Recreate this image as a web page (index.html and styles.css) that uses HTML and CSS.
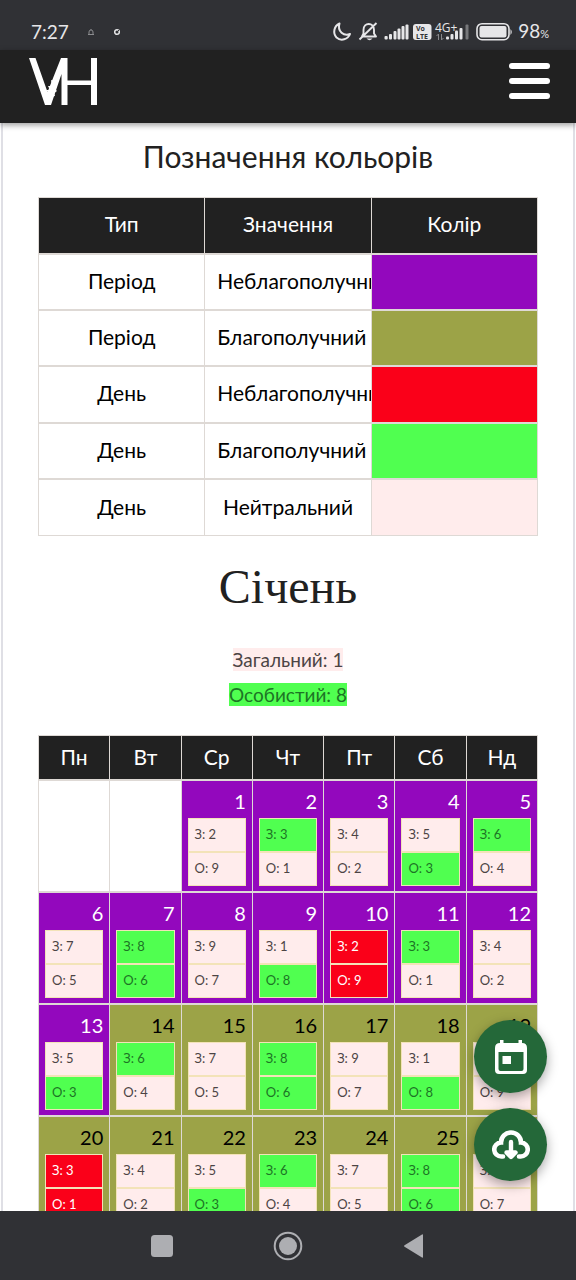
FILE: index.html
```html
<!DOCTYPE html>
<html lang="uk">
<head>
<meta charset="utf-8">
<meta name="viewport" content="width=device-width, initial-scale=1">
<title>Календар</title>
<link rel="stylesheet" href="styles.css">
</head>
<body>
<div class="screen">
  <div class="status">
    <div class="status-left">
      <span class="clock">7:27</span>
      <svg class="dot-icon dim" viewBox="0 0 8 8"><path d="M1 6.500h6M2 6V4a2 2 0 0 1 4 0v2M4 2V1" fill="none" stroke="currentColor"/></svg>
      <svg class="dot-icon" viewBox="0 0 8 8"><circle cx="4" cy="4" r="2.300" fill="none" stroke="currentColor" stroke-width="1.500"/><path d="M4 4l2-2" stroke="#303135"/></svg>
    </div>
    <svg class="status-icons" viewBox="0 0 184 24" role="img" aria-label="Стан пристрою">
      <path d="M7.500 3.500C2 6 .500 13 4.500 17.500 9 21.500 16 19.500 18 14 12 16.500 5 11.500 7.500 3.500z" fill="none" stroke="#e6e6e8" stroke-width="2" stroke-linejoin="round"/>
      <path d="M30 16.500h14l-2-3V10c0-8-10.500-8-10.500 0v3.500zM27.500 19.500L44.500 3" fill="none" stroke="#e6e6e8" stroke-width="1.900" stroke-linejoin="round"/>
      <path d="M34.500 18.500h6q-3 3.500-6 0z" fill="#e6e6e8"/>
      <g fill="#e6e6e8">
        <rect x="52.500" y="16" width="3.200" height="3.500" rx="1"/><rect x="57" y="14" width="3" height="5.500" rx="1"/><rect x="61.500" y="11" width="3" height="8.500" rx="1"/><rect x="65.500" y="8.500" width="3" height="11" rx="1"/><rect x="69.500" y="6" width="3" height="13.500" rx="1"/><rect x="73.500" y="4.500" width="3" height="15" rx="1"/>
        <rect x="81" y="4" width="18.500" height="16" rx="3"/>
      </g>
      <text class="volte" x="84" y="11">Vo</text>
      <text class="volte" x="84" y="19">LTE</text>
      <text class="net" x="103" y="12">4G+</text>
      <path d="M106.500 20v-6l-2 2M109.500 14v6l2-2" stroke="#88898c" fill="none"/>
      <g fill="#e6e6e8">
        <rect x="114" y="16.500" width="3" height="3" rx="1"/><rect x="118.500" y="14" width="3" height="5.500" rx="1"/><rect x="123" y="10.500" width="3" height="9" rx="1"/><rect x="127.500" y="8" width="3" height="11.500" rx="1"/><rect x="133.500" y="4.500" width="3" height="15" rx="1" fill="#77787b"/>
        <rect x="147.500" y="6" width="27" height="11.500" rx="2"/><path d="M178.500 9q2.500 3 0 6z"/>
      </g>
      <rect x="145" y="3.700" width="32" height="16" rx="5" fill="none" stroke="#e6e6e8" stroke-width="1.600"/>
    </svg>
    <span class="battery">98<small>%</small></span>
  </div>

  <header class="topbar">
    <a class="logo" href="#" aria-label="VH">
      <svg viewBox="0 0 68 48"><path fill="#fff" d="M0 0h6.500L18.500 34 32 0h6.500v22.500H62V0h6v47h-6V27H38.500v20h-6V16L22 47h-6z"/><path d="M22 22l3 1v4l3 1-2 3 2 2-3 2 1 3-5 1-3-2 2-2-3-3 4 0-2-4 4 0z" fill="#fff"/></svg>
    </a>
    <button class="burger" type="button" aria-label="Меню"><i></i><i></i><i></i></button>
  </header>

  <main class="viewport">
    <div class="page">
      <h2 class="subtitle">Позначення кольорів</h2>
      <table class="grid legend">
        <thead><tr><th>Тип</th><th>Значення</th><th>Колір</th></tr></thead>
        <tbody>
          <tr><td>Період</td><td>Неблагополучний</td><td class="purple"></td></tr>
          <tr><td>Період</td><td>Благополучний</td><td class="olive"></td></tr>
          <tr><td>День</td><td>Неблагополучний</td><td class="red"></td></tr>
          <tr><td>День</td><td>Благополучний</td><td class="green"></td></tr>
          <tr><td>День</td><td>Нейтральний</td><td class="pink"></td></tr>
        </tbody>
      </table>

      <h1 class="month">Січень</h1>
      <p class="number"><span class="pink">Загальний: 1</span></p>
      <p class="number"><span class="green">Особистий: 8</span></p>

      <table class="grid calendar">
        <thead><tr><th>Пн</th><th>Вт</th><th>Ср</th><th>Чт</th><th>Пт</th><th>Сб</th><th>Нд</th></tr></thead>
        <tbody>
          <tr>
            <td></td>
            <td></td>
            <td class="purple"><b>1</b><div class="pink">З: 2</div><div class="pink">О: 9</div></td>
            <td class="purple"><b>2</b><div class="green">З: 3</div><div class="pink">О: 1</div></td>
            <td class="purple"><b>3</b><div class="pink">З: 4</div><div class="pink">О: 2</div></td>
            <td class="purple"><b>4</b><div class="pink">З: 5</div><div class="green">О: 3</div></td>
            <td class="purple"><b>5</b><div class="green">З: 6</div><div class="pink">О: 4</div></td>
          </tr>
          <tr>
            <td class="purple"><b>6</b><div class="pink">З: 7</div><div class="pink">О: 5</div></td>
            <td class="purple"><b>7</b><div class="green">З: 8</div><div class="green">О: 6</div></td>
            <td class="purple"><b>8</b><div class="pink">З: 9</div><div class="pink">О: 7</div></td>
            <td class="purple"><b>9</b><div class="pink">З: 1</div><div class="green">О: 8</div></td>
            <td class="purple"><b>10</b><div class="red">З: 2</div><div class="red">О: 9</div></td>
            <td class="purple"><b>11</b><div class="green">З: 3</div><div class="pink">О: 1</div></td>
            <td class="purple"><b>12</b><div class="pink">З: 4</div><div class="pink">О: 2</div></td>
          </tr>
          <tr>
            <td class="purple"><b>13</b><div class="pink">З: 5</div><div class="green">О: 3</div></td>
            <td class="olive"><b>14</b><div class="green">З: 6</div><div class="pink">О: 4</div></td>
            <td class="olive"><b>15</b><div class="pink">З: 7</div><div class="pink">О: 5</div></td>
            <td class="olive"><b>16</b><div class="green">З: 8</div><div class="green">О: 6</div></td>
            <td class="olive"><b>17</b><div class="pink">З: 9</div><div class="pink">О: 7</div></td>
            <td class="olive"><b>18</b><div class="pink">З: 1</div><div class="green">О: 8</div></td>
            <td class="olive"><b>19</b><div class="pink">З: 2</div><div class="pink">О: 9</div></td>
          </tr>
          <tr>
            <td class="olive"><b>20</b><div class="red">З: 3</div><div class="red">О: 1</div></td>
            <td class="olive"><b>21</b><div class="pink">З: 4</div><div class="pink">О: 2</div></td>
            <td class="olive"><b>22</b><div class="pink">З: 5</div><div class="green">О: 3</div></td>
            <td class="olive"><b>23</b><div class="green">З: 6</div><div class="pink">О: 4</div></td>
            <td class="olive"><b>24</b><div class="pink">З: 7</div><div class="pink">О: 5</div></td>
            <td class="olive"><b>25</b><div class="green">З: 8</div><div class="green">О: 6</div></td>
            <td class="olive"><b>26</b><div class="pink">З: 9</div><div class="pink">О: 7</div></td>
          </tr>
        </tbody>
      </table>
    </div>

    <div class="fabs">
      <button type="button" aria-label="Календар"><svg class="ico-cal" viewBox="0 0 32 36"><path fill="#fff" fill-rule="evenodd" d="M5 1h3.500v3h15V1H27v3q5 0 5 5v22q0 4-4 4H4q-4 0-4-4V9q0-5 5-5zM3.500 13v17q0 2 2 2h21q2 0 2-2V13zM7.500 17H16v8H7.500z"/></svg></button>
      <button type="button" aria-label="Завантажити"><svg class="ico-cloud" viewBox="0 0 38 32"><path d="M11 27.500H9.500A7 7 0 0 1 9 13.500 10 10 0 0 1 29 13.500a7 7 0 0 1-.500 14H27" fill="none" stroke="#fff" stroke-width="4.600" stroke-linecap="round"/><path d="M19 13v11M14.500 23.500l4.500 4.500 4.500-4.500z" fill="#fff" stroke="#fff" stroke-width="4.400" stroke-linecap="round" stroke-linejoin="round"/></svg></button>
    </div>
  </main>

  <nav class="navbar" aria-label="Системна навігація">
    <button type="button" aria-label="Недавні"><svg viewBox="0 0 30 30"><rect x="4" y="4" width="22" height="22" rx="3.500" fill="#adaeb2"/></svg></button>
    <button type="button" aria-label="Додому"><svg viewBox="0 0 30 30"><circle cx="15" cy="15" r="13.300" fill="none" stroke="#adaeb2" stroke-width="2"/><circle cx="15" cy="15" r="9" fill="#adaeb2"/></svg></button>
    <button type="button" aria-label="Назад"><svg viewBox="0 0 30 30"><path d="M24 4v22q0 1-1 .500L5.500 15.800q-1-.800 0-1.600L23 3.500q1-.500 1 .500z" fill="#adaeb2"/></svg></button>
  </nav>
</div>
</body>
</html>
```
FILE: styles.css
```css
* { box-sizing: border-box; }
body {
  margin: 0;
  font-family: Lato, "Open Sans", sans-serif;
  background: #fff;
  color: #000;
}
button { padding: 0; border: 0; background: none; cursor: pointer; }
svg { display: block; }

.screen { display: flex; flex-direction: column; height: 100vh; overflow: hidden; }

.status {
  display: flex;
  align-items: center;
  height: 50px;
  padding: 14px 27px 0 31px;
  background: #303135;
  color: #e6e6e8;
  font-size: 19px;
  line-height: 24px;
}
.status-left { display: flex; align-items: center; gap: 18px; flex: 1; }
.dot-icon { width: 8px; height: 8px; }
.dot-icon.dim { color: #8b8c8f; }
.status-icons { width: 184px; height: 24px; }
.volte { font: bold 7px "Open Sans", sans-serif; fill: #303135; }
.net { font: 12px "Open Sans", sans-serif; fill: #e6e6e8; }
.battery { padding-left: 2px; }
.battery small { font-size: 11px; }

.topbar {
  position: relative;
  z-index: 1;
  display: flex;
  justify-content: space-between;
  align-items: flex-start;
  height: 73px;
  padding: 8px 26px 0 29px;
  background: #212121;
  box-shadow: 0 2px 6px rgba(0, 0, 0, .4);
}
.logo svg { width: 68px; height: 48px; }
.burger {
  display: flex;
  flex-direction: column;
  justify-content: space-between;
  width: 41px;
  height: 36px;
  margin-top: 5px;
}
.burger i { height: 6px; border-radius: 3px; background: #fff; }

.viewport { position: relative; flex: 1; min-height: 0; overflow: hidden; }
.page {
  margin: 0 1px;
  padding: 15px 35px 0;
  border: solid #dfdfe5;
  border-width: 0 2px;
  text-align: center;
}
.subtitle { margin: 0 0 23px; font-size: 30px; line-height: 36px; font-weight: 400; color: #212121; }

.grid { width: 100%; table-layout: fixed; border-collapse: collapse; }
.grid th, .grid td { border: 1px solid #ded9d5; border-bottom-width: 2px; }
.grid th { background: #212121; color: #fff; font-weight: 400; }
.grid tbody tr:last-child td { border-bottom-width: 1px; }

.legend { height: 339px; }
.legend th, .legend td {
  height: 56px;
  padding: 0 12px 2px;
  font-size: 21px;
  line-height: 24px;
  white-space: nowrap;
  overflow: hidden;
}

.grid .purple { background: #9308bd; color: #fff; }
.grid .olive { background: #9ca347; }
.red { background: #fa0019; color: #fff; }
.green { background: #50ff50; color: #1d7425; }
.pink { background: #ffecec; color: #4c4444; }

.month { margin: 19px 0 29px; font: 400 48px/64px "Liberation Serif", serif; color: #212121; }
.number { margin: 0 0 11px; font-size: 19px; line-height: 24px; }

.calendar { margin-top: 28px; }
.calendar th { height: 44px; padding: 0 0 1px; font-size: 21px; }
.calendar td { height: 112px; padding: 6px 6px 4px; vertical-align: top; }
.calendar b { display: block; height: 31px; font-size: 20px; line-height: 29px; font-weight: 400; text-align: right; }
.calendar div {
  height: 34px;
  padding-left: 6px;
  border: 1px solid #f3e3b8;
  font-size: 13px;
  line-height: 30px;
  text-align: left;
}

.fabs { position: absolute; right: 29px; bottom: 30px; display: grid; gap: 15px; }
.fabs button {
  display: grid;
  place-items: center;
  width: 73px;
  height: 73px;
  border-radius: 50%;
  background: #246839;
  box-shadow: 0 4px 12px rgba(0, 0, 0, .35);
}
.ico-cal { width: 32px; height: 36px; }
.ico-cloud { width: 38px; height: 32px; }

.navbar {
  display: flex;
  justify-content: center;
  align-items: center;
  gap: 96px;
  height: 69px;
  background: #303135;
}
.navbar svg { width: 30px; height: 30px; }
```
